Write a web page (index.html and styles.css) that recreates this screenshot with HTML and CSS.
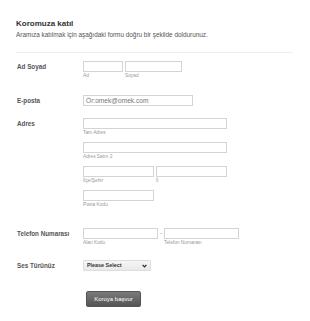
FILE: index.html
```html
<!DOCTYPE html>
<html lang="tr">
<head>
    <meta charset="UTF-8">
    <meta name="viewport" content="width=device-width, initial-scale=1.0">
    <title>Koromuza katıl</title>
    <link rel="stylesheet" href="styles.css">
</head>
<body>
    <form class="form">
        <div class="header">
            <h1>Koromuza katıl</h1>
            <p>Aramıza katılmak için aşağıdaki formu doğru bir şekilde doldurunuz.</p>
        </div>

        <div class="row row-name">
            <label class="row-label">Ad Soyad</label>
            <div class="fields">
                <div class="line">
                    <span class="field">
                        <input type="text" class="w-first">
                        <span class="sub">Ad</span>
                    </span>
                    <span class="field">
                        <input type="text" class="w-last">
                        <span class="sub">Soyad</span>
                    </span>
                </div>
            </div>
        </div>

        <div class="row row-email">
            <label class="row-label">E-posta</label>
            <div class="fields">
                <input type="text" class="w-email" placeholder="Ör:omek@omek.com">
            </div>
        </div>

        <div class="row row-address">
            <label class="row-label">Adres</label>
            <div class="fields">
                <span class="field">
                    <input type="text" class="w-full">
                    <span class="sub">Tam Adres</span>
                </span>
                <span class="field">
                    <input type="text" class="w-full">
                    <span class="sub">Adres Satırı 2</span>
                </span>
                <div class="line">
                    <span class="field">
                        <input type="text" class="w-half">
                        <span class="sub">İlçe/Şehir</span>
                    </span>
                    <span class="field">
                        <input type="text" class="w-half">
                        <span class="sub">İl</span>
                    </span>
                </div>
                <span class="field">
                    <input type="text" class="w-half">
                    <span class="sub">Posta Kodu</span>
                </span>
            </div>
        </div>

        <div class="row row-phone">
            <label class="row-label">Telefon Numarası</label>
            <div class="fields">
                <div class="line">
                    <span class="field">
                        <input type="text" class="w-phone">
                        <span class="sub">Alan Kodu</span>
                    </span>
                    <span class="dash">-</span>
                    <span class="field">
                        <input type="text" class="w-phone">
                        <span class="sub">Telefon Numarası</span>
                    </span>
                </div>
            </div>
        </div>

        <div class="row row-voice">
            <label class="row-label">Ses Türünüz</label>
            <div class="fields">
                <div class="select-wrap">
                    <select>
                        <option>Please Select</option>
                        <option>Soprano</option>
                        <option>Alto</option>
                        <option>Tenor</option>
                        <option>Bas</option>
                    </select>
                    <svg class="chevron" width="5" height="4" viewBox="0 0 5 4">
                        <path d="M0.6 0.8 L2.5 2.8 L4.4 0.8" fill="none" stroke="#222" stroke-width="1.2"/>
                    </svg>
                </div>
            </div>
        </div>

        <div class="actions">
            <button type="submit">Koroya başvur</button>
        </div>
    </form>
</body>
</html>
```

FILE: styles.css
```css
body {
    margin: 0;
    padding: 0;
    background: #fff;
    font-family: "Liberation Sans", Arial, sans-serif;
    color: #555;
}

.form {
    padding: 18px 17px 0 16px;
}

.header {
    border-bottom: 1px solid #eee;
    padding-bottom: 13px;
    margin-bottom: 8px;
}

.header h1 {
    margin: 0 0 1px;
    font-size: 8px;
    line-height: 11px;
    font-weight: bold;
    color: #333;
}

.header p {
    margin: 0;
    font-size: 6.4px;
    line-height: 9px;
    color: #555;
}

.row {
    display: flex;
}

.row-label {
    width: 66px;
    padding-left: 1px;
    font-size: 6.3px;
    line-height: 11px;
    font-weight: bold;
    color: #555;
}

.fields {
    display: flex;
    flex-direction: column;
    gap: 5px;
}

.line {
    display: flex;
    gap: 2px;
}

.field {
    display: flex;
    flex-direction: column;
}

input {
    box-sizing: border-box;
    height: 11px;
    margin: 0;
    padding: 0 2px;
    border: 1px solid #d4d4d4;
    background: #fff;
    font-family: "Liberation Sans", Arial, sans-serif;
    font-size: 6.6px;
    color: #555;
}

input::placeholder {
    color: #777;
}

.sub {
    font-size: 4.8px;
    line-height: 8px;
    color: #999;
}

.w-first { width: 40px; }
.w-last { width: 57px; }
.w-email { width: 110px; }
.w-full { width: 144px; }
.w-half { width: 71px; }
.w-phone { width: 75px; }

.dash {
    font-size: 6px;
    line-height: 11px;
    color: #777;
}

.row-name {
    margin-bottom: 15px;
}

.row-email {
    margin-bottom: 12px;
}

.row-address {
    margin-bottom: 19px;
}

.row-phone {
    margin-bottom: 13px;
}

.select-wrap {
    position: relative;
    display: flex;
    width: 68px;
    height: 11px;
}

select {
    appearance: none;
    -webkit-appearance: none;
    display: block;
    box-sizing: border-box;
    width: 68px;
    height: 11px;
    margin: 0;
    padding: 0 0 0 3px;
    border: 1px solid #ddd;
    border-radius: 1px;
    background: linear-gradient(#f6f6f6, #e9e9e9);
    font-family: "Liberation Sans", Arial, sans-serif;
    font-size: 5.4px;
    line-height: 9px;
    font-weight: bold;
    color: #333;
}

.chevron {
    position: absolute;
    right: 4px;
    top: 4px;
    pointer-events: none;
}

.actions {
    padding: 16px 0 0 70px;
}

button {
    box-sizing: border-box;
    width: 55px;
    height: 16px;
    padding: 0;
    border: 1px solid #555;
    border-radius: 2px;
    background: linear-gradient(#7a7a7a, #555);
    box-shadow: 0 1px 1px rgba(0, 0, 0, 0.2);
    font-family: "Liberation Sans", Arial, sans-serif;
    font-size: 6px;
    color: #fff;
    cursor: pointer;
}
```
